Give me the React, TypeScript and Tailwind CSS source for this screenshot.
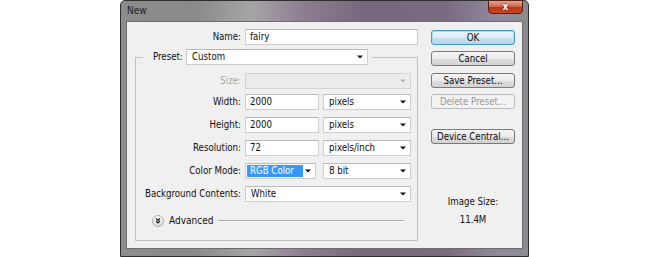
import React from "react";

const font = "font-['DejaVu_Sans_Condensed','Liberation_Sans',sans-serif]";

function Arrow({ disabled }: { disabled?: boolean }) {
  return (
    <svg width="6" height="4" viewBox="0 0 6 4" className="shrink-0">
      <path d="M0 0.5 L6 0.5 L3 3.5 Z" fill={disabled ? "#b4b4b4" : "#111"} />
    </svg>
  );
}

function Input({ value, w }: { value: string; w: string }) {
  return (
    <div className={`${w} h-[16px] bg-white border border-[#cdcdcd] border-t-[#b8b8b8] flex items-center pl-[4px] text-[#0d0d0d]`}>
      {value}
    </div>
  );
}

function Select({ value, w, disabled }: { value: string; w: string; disabled?: boolean }) {
  return (
    <div
      className={`${w} h-[16px] border flex items-center justify-between pl-[5px] pr-[4px] ${
        disabled ? "bg-[#ececec] border-[#d2d2d2]" : "bg-white border-[#cdcdcd] border-t-[#b8b8b8] text-[#0d0d0d]"
      }`}
    >
      <span>{value}</span>
      <Arrow disabled={disabled} />
    </div>
  );
}

function Row({ label, children, gray, mt }: { label: string; children: React.ReactNode; gray?: boolean; mt: string }) {
  return (
    <div className={`flex items-center gap-[4px] h-[16px] ${mt}`}>
      <div className={`w-[105px] text-right ${gray ? "text-[#a8a8a8]" : "text-[#111]"}`}>{label}</div>
      {children}
    </div>
  );
}

function Button({ label, mt, primary, disabled }: { label: string; mt: string; primary?: boolean; disabled?: boolean }) {
  const cls = primary
    ? "border-[#3d9bd1] bg-[linear-gradient(#eef6fb,#dcebf5_50%,#c9e0ef_51%,#bcd8ec)] shadow-[inset_0_0_0_1px_#a6dcf6] text-[#0d0d0d]"
    : disabled
    ? "border-[#b8bcbf] bg-[#f3f3f3] text-[#9a9a9a]"
    : "border-[#7a7a7a] bg-[linear-gradient(#f4f4f4,#ebebeb_50%,#dddddd_51%,#d2d2d2)] text-[#0d0d0d]";
  return (
    <div className={`${mt} h-[15px] w-[84px] rounded-[3px] border flex items-center justify-center ${cls}`}>
      {label}
    </div>
  );
}

export default function App() {
  return (
    <div className={`w-[650px] h-[257px] bg-white flex pl-[120px] text-[9.6px] leading-none ${font}`}>
      <div className="w-[409px] h-[257px] border border-[#2e2e2e] rounded-t-[5px] flex flex-col bg-[linear-gradient(90deg,#8c8c8c_0%,#8a8a8a_18%,#a7a4a7_32%,#8c7e90_45%,#77697d_60%,#7a6c80_80%,#90889a_92%,#8b8b8e_100%)]">
        <div className="h-[20px] flex items-start justify-between">
          <div className="pl-[6px] pt-[5px] text-[10px] text-[#1c1c1c]">New</div>
          <div className="mr-[5px] w-[35px] h-[14px] -mt-px rounded-b-[4px] border border-[#5a1d14] bg-[linear-gradient(#e3a492,#cf6a52_45%,#b93519_55%,#c9482a)] flex items-center justify-center text-white text-[10px] font-bold [text-shadow:0_0_2px_#4a0a00]">
            x
          </div>
        </div>
        <div className="mx-[5px] h-[228px] bg-[#f0f0f0] border border-[#6d6d6d] flex pt-[7px]">
          <div className="w-[291px] flex flex-col">
            <div className="flex items-center gap-[4px] h-[16px]">
              <div className="w-[114px] text-right text-[#111]">Name:</div>
              <Input value="fairy" w="w-[173px]" />
            </div>
            <fieldset className="mt-[4px] ml-[8px] w-[283px] border border-[#c2c2c2] pl-[7px] pb-[13px]">
              <legend className="flex items-center pl-[10px] pr-[4px]">
                <span className="text-[#111] w-[28px]">Preset:</span>
                <div className="ml-[5px]">
                  <Select value="Custom" w="w-[182px]" />
                </div>
              </legend>
              <div className="-ml-[7px] flex flex-col">
                <Row label="Size:" gray mt="mt-[8px]">
                  <Select value="" w="w-[166px]" disabled />
                </Row>
                <Row label="Width:" mt="mt-[5px]">
                  <Input value="2000" w="w-[74px]" />
                  <Select value="pixels" w="w-[88px]" />
                </Row>
                <Row label="Height:" mt="mt-[7px]">
                  <Input value="2000" w="w-[74px]" />
                  <Select value="pixels" w="w-[88px]" />
                </Row>
                <Row label="Resolution:" mt="mt-[7px]">
                  <Input value="72" w="w-[74px]" />
                  <Select value="pixels/inch" w="w-[88px]" />
                </Row>
                <Row label="Color Mode:" mt="mt-[7px]">
                  <div className="w-[71px] h-[16px] bg-white border border-[#cdcdcd] border-t-[#b8b8b8] flex items-center pl-[1px] pr-[4px] justify-between">
                    <span className="w-[56px] h-[12px] bg-[#3399ff] text-white flex items-center pl-[3px]">RGB Color</span>
                    <Arrow />
                  </div>
                  <div className="ml-[3px]">
                    <Select value="8 bit" w="w-[88px]" />
                  </div>
                </Row>
                <Row label="Background Contents:" mt="mt-[7px]">
                  <Select value="White" w="w-[166px]" />
                </Row>
                <div className="mt-[13px] h-[12px] flex items-center pl-[16px] pr-[13px]">
                  <div className="w-[12px] h-[12px] rounded-full border border-[#a9a9a9] bg-[linear-gradient(#ffffff,#dedede)] flex items-center justify-center">
                    <svg width="6" height="6" viewBox="0 0 6 6">
                      <path d="M1 0.5 L3 2.5 L5 0.5 M1 3 L3 5 L5 3" stroke="#222" strokeWidth="1.2" fill="none" />
                    </svg>
                  </div>
                  <span className="ml-[5px] text-[#111] text-[10px]">Advanced</span>
                  <div className="ml-[5px] flex-1 h-[2px] border-t border-[#a8a8a8] border-b border-b-white" />
                </div>
              </div>
            </fieldset>
          </div>
          <div className="ml-[13px] mt-[1px] flex flex-col items-center w-[84px]">
            <Button label="OK" mt="mt-0" primary />
            <Button label="Cancel" mt="mt-[6px]" />
            <Button label="Save Preset..." mt="mt-[7px]" />
            <Button label="Delete Preset..." mt="mt-[6px]" disabled />
            <Button label="Device Central..." mt="mt-[20px]" />
            <div className="mt-[53px] h-[10px] text-[#111] flex items-center">Image Size:</div>
            <div className="mt-[8px] h-[10px] text-[#111] flex items-center">11.4M</div>
          </div>
        </div>
      </div>
    </div>
  );
}
